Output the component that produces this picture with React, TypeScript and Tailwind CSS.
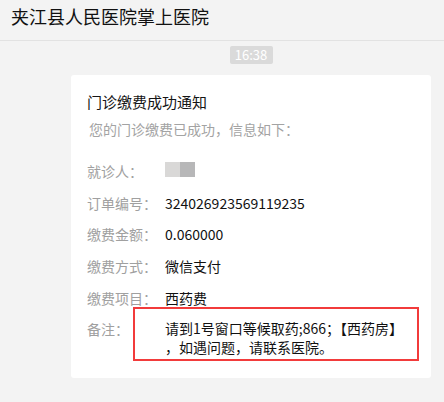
import React from 'react';

const rows: { label: string; value: React.ReactNode }[] = [
    {
        label: '就诊人：',
        value: (
            <span className="flex h-[15px] mt-[1px]">
                <span className="w-[15px] h-full bg-[#d9d8d7]" />
                <span className="w-[15px] h-full bg-[#b7b7b8]" />
            </span>
        ),
    },
    { label: '订单编号：', value: '324026923569119235' },
    { label: '缴费金额：', value: '0.060000' },
    { label: '缴费方式：', value: '微信支付' },
    { label: '缴费项目：', value: '西药费' },
];

export default function App() {
    return (
        <div
            className="w-[444px] h-[402px] bg-[#f3f3f3] overflow-hidden"
            style={{ fontFamily: '"Noto Sans CJK SC", "Noto Sans", sans-serif' }}
        >
            <div className="h-[41px] border-b border-[#e2e2e2] pl-[11px] pt-[3px]">
                <span className="text-[18px] leading-[26px] text-[#111]">夹江县人民医院掌上医院</span>
            </div>

            <div className="ml-[71px] w-[360px] flex flex-col items-center">
                <div className="mt-[5px] w-[43px] h-[18px] rounded-[2px] bg-[#dadada] text-white text-[13px] leading-[18px] text-center">
                    16:38
                </div>

                <div className="mt-[11px] w-full h-[303px] bg-white rounded-[3px] pl-[16px] pt-[16px]">
                    <div className="text-[15px] leading-[22px] text-[#151515]">门诊缴费成功通知</div>
                    <div className="mt-[6px] pl-[2px] text-[14px] leading-[20px] text-[#a3a3a3]">
                        您的门诊缴费已成功，信息如下：
                    </div>

                    <div className="mt-[22px] flex flex-col gap-[11.7px] text-[14px] leading-[20px]">
                        {rows.map((r, i) => (
                            <div key={i} className="flex">
                                <span className="w-[78px] text-[#a0a0a0]">{r.label}</span>
                                <span className="text-[#111]">{r.value}</span>
                            </div>
                        ))}
                        <div className="relative flex">
                            <span className="w-[78px] text-[#a0a0a0]">备注：</span>
                            <span className="text-[#111] leading-[19px]">
                                请到1号窗口等候取药;866；【西药房】
                                <br />
                                ，如遇问题，请联系医院。
                            </span>
                            <div className="absolute left-[46px] top-[-12px] w-[286px] h-[54px] border-2 border-[#f23b3b]" />
                        </div>
                    </div>
                </div>
            </div>
        </div>
    );
}
